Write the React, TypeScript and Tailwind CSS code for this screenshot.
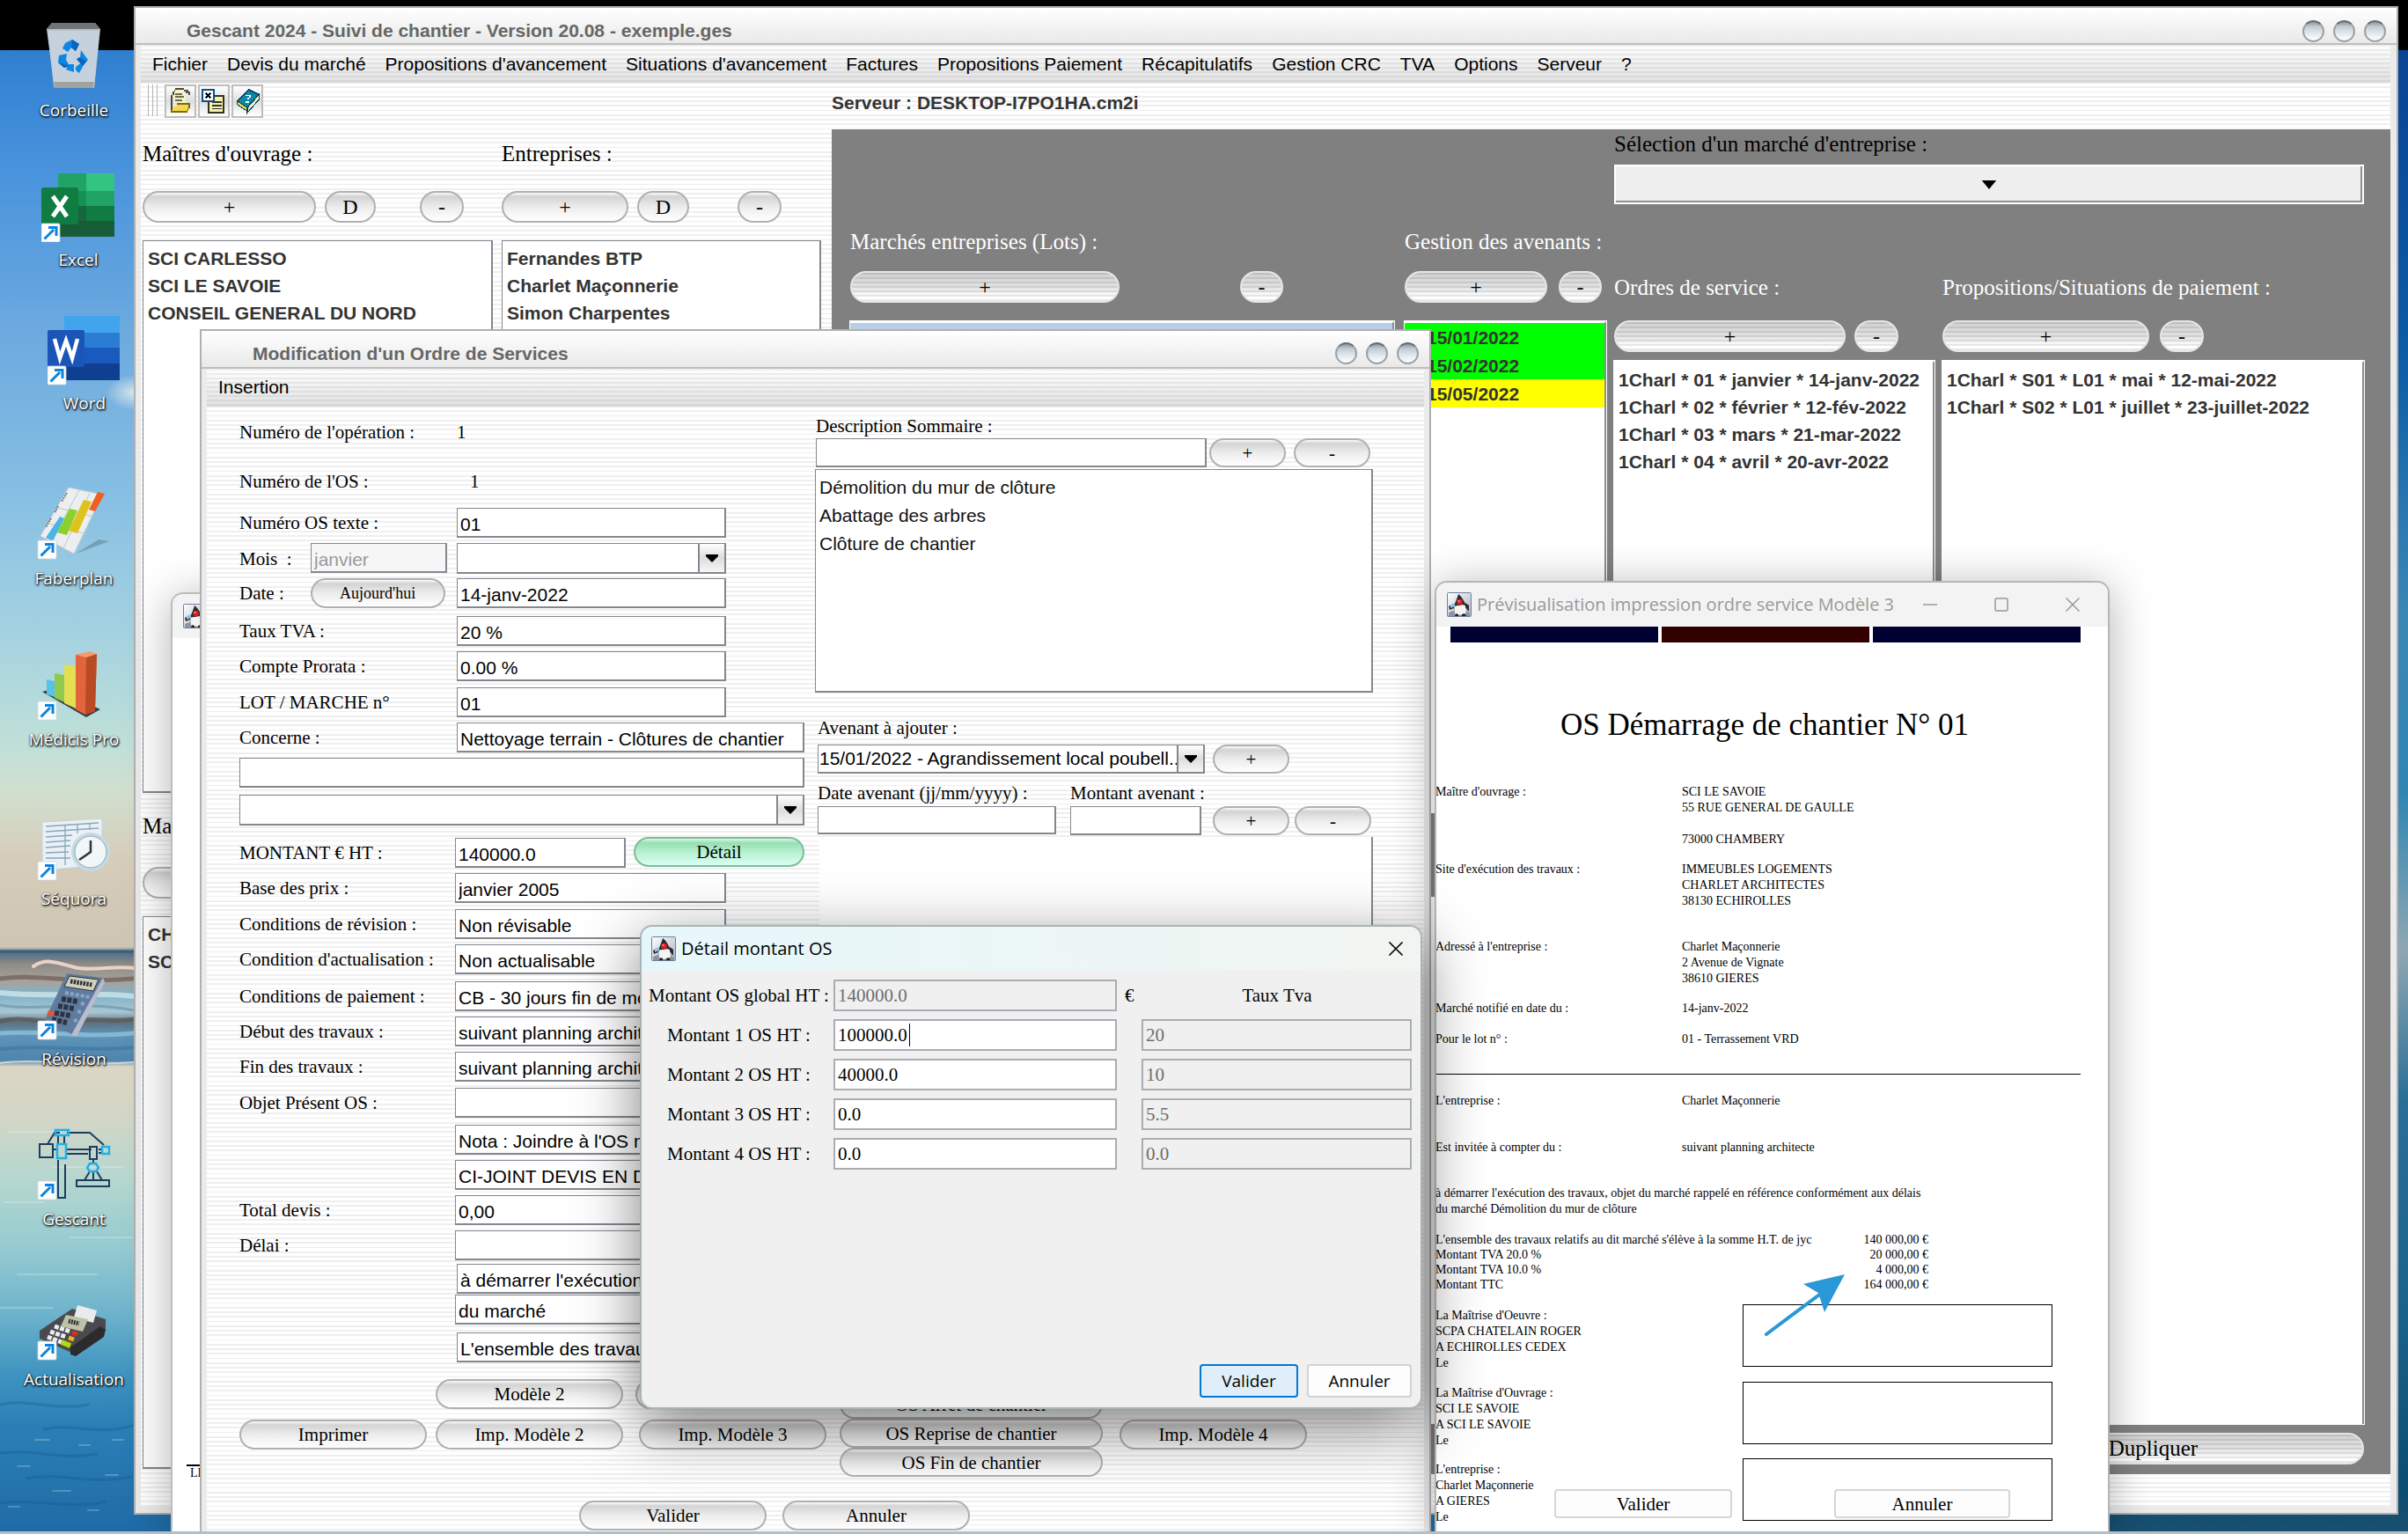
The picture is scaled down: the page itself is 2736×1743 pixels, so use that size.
import React from "react";

const STRIPES =
  "bg-[repeating-linear-gradient(180deg,#efefef_0,#efefef_2px,#fff_2px,#fff_5px,#efefef_5px,#efefef_7px,#fff_7px,#fff_11px,#efefef_11px,#efefef_12px,#fff_12px,#fff_16px,#efefef_16px,#efefef_18px,#fff_18px,#fff_21px)]";
const MENU_STRIPES =
  "bg-[repeating-linear-gradient(180deg,rgba(0,0,0,0.06)_0,rgba(0,0,0,0.06)_2px,transparent_2px,transparent_5px),linear-gradient(180deg,#ffffff,#e2e2e2)]";
const SANS = "font-['Liberation_Sans',Arial,sans-serif]";
const SERIF = "font-['Liberation_Serif','Times_New_Roman',serif]";
const UI = "font-['Open_Sans','Segoe_UI',sans-serif]";
const FIELD = "border border-r-2 border-b-2 border-[#85878f] bg-white";

/* ---------- Shared controls ---------- */

function Pill({
  children,
  className = "",
  tone = "light",
}: {
  children: React.ReactNode;
  className?: string;
  tone?: "light" | "panel" | "green";
}) {
  const tones = {
    light:
      "border-[#b0b0b0] bg-[linear-gradient(180deg,#fafafa_0%,#d3d3d3_14%,#ececec_50%,#ffffff_100%)]",
    panel:
      "border-[#e6e6e6] bg-[repeating-linear-gradient(180deg,rgba(0,0,0,0.09)_0,rgba(0,0,0,0.09)_2px,transparent_2px,transparent_5px),linear-gradient(180deg,#cfcfcf_0%,#e2e2e2_50%,#ffffff_85%)]",
    green:
      "border-[#7dbd98] bg-[linear-gradient(180deg,#d9f8e6_0%,#98dfb2_16%,#b5f0cf_50%,#d8fff4_100%)]",
  };
  return (
    <button
      type="button"
      className={`flex shrink-0 items-center justify-center rounded-full border-2 text-black ${SERIF} ${tones[tone]} ${className}`}
    >
      {children}
    </button>
  );
}

function WindowDots() {
  return (
    <div className="flex gap-[10px]">
      {["Réduire", "Agrandir", "Fermer"].map((n) => (
        <button
          key={n}
          type="button"
          aria-label={n}
          className="size-[25px] rounded-full border-2 border-[#9aa1a7] border-t-[#666d73] bg-[linear-gradient(180deg,#8f979e_0%,#c3ccd3_25%,#dfe8ee_60%,#ffffff_100%)]"
        />
      ))}
    </div>
  );
}

function Combo({
  id,
  label,
  value,
  className = "",
}: {
  id: string;
  label?: string;
  value: string;
  className?: string;
}) {
  return (
    <div className={`relative shrink-0 ${FIELD} ${className}`}>
      <select
        id={id}
        aria-label={label}
        defaultValue={value}
        className={`h-full w-full appearance-none bg-transparent pr-6 pl-px text-[21px] leading-7 text-black ${SANS}`}
      >
        <option value={value}>{value}</option>
      </select>
      <div className="pointer-events-none absolute inset-y-0 right-0 flex w-[30px] items-center justify-center border-l-2 border-[#85878f] bg-[linear-gradient(180deg,#fff,#ddd_50%,#f6f6f6)]">
        <svg width="14" height="9" viewBox="0 0 14 9">
          <path d="M0 0H14V2L7 9L0 2Z" fill="#000" />
        </svg>
      </div>
    </div>
  );
}

function Duke({ className = "" }: { className?: string }) {
  return (
    <svg className={className} width="28" height="28" viewBox="0 0 28 28" aria-hidden="true">
      <defs>
        <linearGradient id="dukeBg" x1="0" y1="0" x2="1" y2="1">
          <stop offset="0" stopColor="#ffffff" />
          <stop offset="1" stopColor="#a9b2c4" />
        </linearGradient>
      </defs>
      <rect x="0.5" y="0.5" width="27" height="27" rx="1" fill="url(#dukeBg)" stroke="#6d7f9b" />
      <path d="M2 23C7 20 20 20 26 24V27H2Z" fill="#8b93a5" />
      <path d="M9 14C8 19 8 22 9 26H20C23 24 23 18 20 13Z" fill="#f4f4f4" stroke="#777" strokeWidth="0.6" />
      <path d="M13 2C17 5 20 10 22 16C20 14 17 14 14 15C12 15 10 15 8 16C10 10 12 6 13 2Z" fill="#2b2b2e" />
      <path d="M8 13L2 16L3 20L8 18Z" fill="#2a2a2e" />
      <path d="M4 14L9 12V16L4 18Z" fill="#8cc5de" />
      <path d="M21 12L25 15L25 22L21 17Z" fill="#2a2a2e" />
      <circle cx="14.5" cy="11" r="3.300" fill="#e21d1d" />
      <circle cx="13.6" cy="10" r="1.1" fill="#ff8f8f" />
      <path d="M10 24L9 27H13V25ZM17 25V27H22L20 24Z" fill="#222" />
    </svg>
  );
}

/* ---------- Desktop ---------- */

function Shortcut({ x, y }: { x: number; y: number }) {
  return (
    <g transform={`translate(${x} ${y})`}>
      <rect width="21" height="21" rx="1.5" fill="#fff" stroke="#c9d4e2" strokeWidth="0.8" />
      <path d="M3.5 17.5L14 7" stroke="#0b84de" strokeWidth="3" />
      <path d="M8 4.500H17V14" fill="none" stroke="#0b84de" strokeWidth="3" />
    </g>
  );
}

function DesktopIcon({
  name,
  className,
  children,
}: {
  name: string;
  className: string;
  children: React.ReactNode;
}) {
  return (
    <button type="button" className={`absolute flex w-[160px] flex-col items-center ${className}`}>
      <svg width="84" height="84" viewBox="0 0 84 84" aria-hidden="true">
        {children}
      </svg>
      <span
        className={`mt-[6px] text-[19px] leading-7 text-white [text-shadow:1px_1px_2px_#000,0_1px_3px_#000] ${UI}`}
      >
        {name}
      </span>
    </button>
  );
}

function Desktop() {
  return (
    <>
      <div className="absolute inset-0 bg-[linear-gradient(180deg,#2f7fd0_57px,#4a94dd_200px,#6daadf_380px,#86bfe3_560px,#a5d2e0_720px,#c0e0d8_850px,#d2dfcf_900px,#d6ccb9_980px,#cfc5b5_1076px,#4d6e86_1082px,#8e8a86_1095px,#a9a29a_1115px,#7fb3cb_1130px,#a9c7d2_1150px,#5d7180_1162px,#5e95b8_1175px,#4f84ad_1205px,#dcd6c4_1212px,#d3d6c6_1270px,#b5d7cf_1340px,#94cad0_1420px,#6fb4cc_1490px,#3f94c0_1560px,#2a80b6_1620px,#1f6aa6_1743px)]" />
      <div className="absolute inset-y-0 right-0 w-1/3 bg-[linear-gradient(180deg,#0a4494_57px,#0c5ba4_400px,#2b7ab2_600px,#3b87b4_700px,#2f86b3_900px,#8fa7b2_1080px,#2a6f96_1250px,#1b6288_1500px,#0b4d72_1690px,#1b4f70_1743px)]" />
      <svg className="absolute top-[1076px] left-0" width="152" height="660" viewBox="0 0 152 660" aria-hidden="true">
        <g fill="none" strokeLinecap="round">
          <path d="M0 5H152" stroke="#35587a" strokeWidth="3" strokeOpacity="0.8" />
          <path d="M38 22C52 12 66 18 84 23S130 21 152 24" stroke="#e8d3c6" strokeWidth="4" />
          <path d="M0 36C40 30 80 42 152 36" stroke="#6d5d55" strokeWidth="5" strokeOpacity="0.7" />
          <path d="M0 52C60 58 100 50 152 56" stroke="#cfe6ec" strokeWidth="6" strokeOpacity="0.8" />
          <path d="M0 66C40 74 90 60 152 72" stroke="#6c96ae" strokeWidth="3" strokeOpacity="0.7" />
          <path d="M0 84C30 78 50 88 80 84S130 86 152 82" stroke="#5a5450" strokeWidth="5" strokeOpacity="0.75" />
          <path d="M0 98C50 94 90 104 152 98" stroke="#8fc0da" strokeWidth="5" strokeOpacity="0.8" />
          <path d="M0 116C50 110 100 120 152 114" stroke="#3e78a4" strokeWidth="4" strokeOpacity="0.7" />
          <path d="M0 132C40 126 90 136 152 131" stroke="#dfe3dc" strokeWidth="2" strokeOpacity="0.8" />
          <g stroke="#ffffff" strokeOpacity="0.22" strokeWidth="2">
            <path d="M10 210H70M60 250H140M5 290H50M80 330H150M20 372H110M0 410H60M40 560H56M90 566H102M20 590H34M120 600H134M60 618H80M100 640H112M10 636H22M128 560H140" />
          </g>
          <g stroke="#0f5490" strokeOpacity="0.3" strokeWidth="3">
            <path d="M0 520C30 512 60 528 100 520M50 548C80 540 110 556 150 544M0 575C40 570 70 584 110 576M30 604C70 596 100 612 150 602M0 632C40 626 80 640 120 630" />
          </g>
        </g>
      </svg>
      <div className="absolute top-[426px] left-[120px] h-10 w-16 bg-[radial-gradient(closest-side,rgba(240,240,238,0.8),rgba(240,240,238,0))]" />
      <div className="absolute inset-x-0 top-0 h-[57px] bg-black" />

      <DesktopIcon name="Corbeille" className="top-[21px] left-[4px]">
        <path d="M11 12L17 5H66L72 12L65 79H20Z" fill="#b9c2cb" />
        <path d="M11 12L17 5H66L72 12Z" fill="#6f7478" />
        <path d="M12 14H71L65 78H19Z" fill="#c9d6e2" fillOpacity="0.75" />
        <path d="M19 72H65L64 79H20Z" fill="#a1a39f" />
        <g fill="#0c87e4">
          <path d="M32 28L40 24L48 29L44 37L39 33L35 38L29 34Z" />
          <path d="M50 36L58 47L52 54L45 46L49 44Z" />
          <path d="M25 42L34 40L33 47L37 54L31 56L24 50Z" />
          <path d="M36 52H42V61L33 58ZM44 55L52 49V55L48 62L44 59Z" />
        </g>
        <path d="M40 24L48 29L44 37L39 33ZM52 54L45 46L49 44L56 49ZM24 50L37 54L31 56Z" fill="#0a63bd" />
      </DesktopIcon>
      <DesktopIcon name="Excel" className="top-[191px] left-[9px]">
        <path d="M19 6H51V78H19Z" fill="#21a366" />
        <path d="M51 6H83V26H51Z" fill="#33c481" />
        <path d="M19 26H51V44H19Z" fill="#169154" />
        <path d="M51 26H83V43H51Z" fill="#21a366" />
        <path d="M19 43H51V60H19Z" fill="#14683c" />
        <path d="M51 43H83V60H51Z" fill="#107c41" />
        <path d="M19 60H83V78H19Z" fill="#185c37" />
        <rect x="0" y="22" width="42" height="42" rx="2" fill="#107c41" />
        <path d="M13 32L29 55M29 32L13 55" fill="none" stroke="#fff" strokeWidth="5" />
        <Shortcut x={0} y={63} />
      </DesktopIcon>
      <DesktopIcon name="Word" className="top-[354px] left-[16px]">
        <path d="M19 5H82V24H19Z" fill="#41a5ee" />
        <path d="M19 24H82V41H19Z" fill="#2b7cd3" />
        <path d="M19 41H82V59H19Z" fill="#185abd" />
        <path d="M19 59H82V78H19Z" fill="#103f91" />
        <rect x="0" y="21" width="42" height="42" rx="2" fill="#1b55b8" />
        <path d="M8 31L14 53L21 33L28 53L34 31" fill="none" stroke="#fff" strokeWidth="4.500" />
        <Shortcut x={0} y={62} />
      </DesktopIcon>
      <DesktopIcon name="Faberplan" className="top-[553px] left-[4px]">
        <path d="M44 76L82 62L70 60Z" fill="#456" fillOpacity="0.35" />
        <path d="M36 1L74 9L42 76L4 56Z" fill="#eceef0" stroke="#cfd3d6" />
        <path d="M48 4L16 62M60 7L30 70M14 42L56 54M24 24L64 34" stroke="#c3c8cc" />
        <path d="M10 58L26 34L31 36L18 62Z" fill="#4cb5e6" />
        <path d="M23 52L37 25L46 27L34 55Z" fill="#8bd02c" />
        <path d="M36 50L53 15L62 17L46 53Z" fill="#e0c21c" />
        <path d="M59 26L69 6L77 8L66 28Z" fill="#ee5f22" />
        <path d="M34 7L28 17M24 22L20 30M16 36L10 46" stroke="#777" strokeWidth="2" strokeDasharray="2 1" />
        <Shortcut x={1} y={61} />
      </DesktopIcon>
      <DesktopIcon name="Médicis Pro" className="top-[736px] left-[4px]">
        <path d="M6 50L20 46L72 70L56 79Z" fill="#3c3f42" />
        <path d="M11 36L20 38V56L11 53Z" fill="#58c2ea" />
        <path d="M20 29L31 31V62L20 57Z" fill="#8fca4f" />
        <path d="M31 19L44 21V69L31 63Z" fill="#e3df52" />
        <path d="M44 8L60 5L68 7L66 72L55 76L44 70Z" fill="#e2643a" />
        <path d="M56 11L68 7L66 72L55 76Z" fill="#b94a26" />
        <path d="M44 8L60 4L68 7L56 11Z" fill="#f39a6e" />
        <Shortcut x={1} y={61} />
      </DesktopIcon>
      <DesktopIcon name="Séquora" className="top-[917px] left-[4px]">
        <path d="M6 17L74 13V66L6 72Z" fill="#e9f1f6" stroke="#c3d2dc" />
        <path d="M10 22L70 18M10 28L70 24M10 34L40 32M10 40L38 38M10 46L38 44M10 52L36 51M10 58L38 58M32 21V66M46 20V30M60 18V26" stroke="#8aa7ba" strokeWidth="1.300" />
        <circle cx="61" cy="51" r="22" fill="#c5d9e6" />
        <circle cx="61" cy="51" r="18" fill="#f1f6f9" stroke="#8fa5b5" />
        <path d="M61 38V51L48 60" fill="none" stroke="#333" strokeWidth="2.500" />
        <Shortcut x={1} y={62} />
      </DesktopIcon>
      <DesktopIcon name="Révision" className="top-[1099px] left-[4px]">
        <path d="M34 7L75 12L42 77L8 62Z" fill="#5f7ca0" />
        <path d="M75 12L77 17L45 79L39 77Z" fill="#b9bccb" />
        <path d="M37 10L70 14L64 27L31 22Z" fill="#cfd0c0" stroke="#333" />
        <path d="M38 16L63 20" stroke="#333" strokeWidth="5" strokeDasharray="2.500 1.200" />
        <path d="M28 36L46 39M24 44L42 47M20 52L38 55M17 59L34 63" stroke="#2d3440" strokeWidth="6" strokeDasharray="5 1.500" />
        <path d="M32 29L60 34M50 41L54 42M46 50L50 51M42 60L46 61" stroke="#8ba4c4" strokeWidth="4" strokeDasharray="4 2" />
        <path d="M13 49L20 51L18 56L11 54Z" fill="#ee5230" />
        <Shortcut x={1} y={61} />
      </DesktopIcon>
      <DesktopIcon name="Gescant" className="top-[1281px] left-[4px]">
        <g fill="none" stroke="#1d3c5e" strokeWidth="2">
          <path d="M12 19L20 6H26M34 6H60L76 20" />
          <path d="M18 25H22M34 25H62M34 30H58M70 25H74M70 29H74" />
          <rect x="3" y="19" width="15" height="15" />
          <rect x="60" y="22" width="8" height="14" />
          <path d="M24 37V80H32V42M24 8V19M31 8V19M64 36V40M60 50L54 60M64 50V60M68 50L74 60" />
          <rect x="45" y="60" width="37" height="7" />
        </g>
        <g fill="none" stroke="#1fb0e6" strokeWidth="2.500">
          <rect x="21" y="3" width="15" height="6" />
          <rect x="23" y="19" width="10" height="16" />
          <rect x="74" y="22" width="8" height="8" />
          <path d="M60 41H67L70 46L67 50H60L57 46Z" />
        </g>
        <Shortcut x={1} y={61} />
      </DesktopIcon>
      <DesktopIcon name="Actualisation" className="top-[1463px] left-[4px]">
        <path d="M3 49L40 24L78 36V48L44 76L3 58Z" fill="#4a4a4e" />
        <path d="M38 68L72 44L78 48L76 56L44 78L38 76Z" fill="#2b2b2e" />
        <path d="M46 20L68 26L64 40L42 34Z" fill="#e9ebec" />
        <path d="M33 31L58 36L52 50L27 44Z" fill="#bcc3a8" />
        <path d="M36 38L48 41" stroke="#333" strokeWidth="5" strokeDasharray="2 1" />
        <path d="M20 44L38 50M15 50L33 56M12 56L28 62" stroke="#eceef0" strokeWidth="5" strokeDasharray="5 1.500" />
        <path d="M40 51L46 53" stroke="#e02a20" strokeWidth="5" />
        <path d="M36 57L42 59" stroke="#f2b21d" strokeWidth="5" />
        <path d="M28 62L38 66" stroke="#b4d90f" strokeWidth="6" />
        <Shortcut x={1} y={61} />
      </DesktopIcon>
    </>
  );
}

/* ---------- Main window ---------- */

const MENUS = [
  "Fichier",
  "Devis du marché",
  "Propositions d'avancement",
  "Situations d'avancement",
  "Factures",
  "Propositions Paiement",
  "Récapitulatifs",
  "Gestion CRC",
  "TVA",
  "Options",
  "Serveur",
  "?",
];

function ToolButton({ label, children }: { label: string; children: React.ReactNode }) {
  return (
    <button
      type="button"
      aria-label={label}
      className="flex h-[38px] w-[36px] items-center justify-center border-2 border-[#bdbdbd] bg-[linear-gradient(180deg,#fff,#dedede_50%,#fff)]"
    >
      <svg width="30" height="30" viewBox="0 0 16 16" shapeRendering="crispEdges" aria-hidden="true">
        {children}
      </svg>
    </button>
  );
}

function MainList({ items, className = "" }: { items: string[]; className?: string }) {
  return (
    <ul
      className={`overflow-hidden pt-1 pl-[5px] text-[21px] leading-[31px] font-bold whitespace-nowrap text-[#333] ${SANS} ${className}`}
    >
      {items.map((t) => (
        <li key={t}>{t}</li>
      ))}
    </ul>
  );
}

const PANEL_LIST = "border-t-2 border-r-2 border-white border-r-[#8a8c94] outline-1 outline-white bg-white";
const CAPTION = `h-7 text-[25px] leading-7 whitespace-nowrap ${SERIF}`;

function MainWindow() {
  return (
    <section className="absolute top-[7px] right-[11px] bottom-[22px] left-[152px] flex flex-col border-2 border-[#b0b0b0] bg-[#ebebeb] pr-[7px] pb-[7px] pl-[6px]">
      <header className="-mr-[7px] -ml-[6px] flex h-[42px] shrink-0 items-center justify-between border-b-2 border-[#bdbdbd] bg-[linear-gradient(180deg,#fff,#e9e9e9)] pt-3 pr-3 pl-[58px]">
        <h1 className={`text-[21px] leading-7 font-bold text-[#666] ${SANS}`}>
          Gescant 2024 - Suivi de chantier - Version 20.08 - exemple.ges
        </h1>
        <WindowDots />
      </header>
      <div className={`flex min-h-0 flex-1 flex-col ${STRIPES}`}>
        <nav
          className={`flex h-[43px] shrink-0 items-center gap-[22px] border-b-2 border-[#d8d8d8] pt-[3px] pl-[13px] text-[21px] leading-7 whitespace-nowrap text-black ${SANS} ${MENU_STRIPES}`}
        >
          {MENUS.map((m) => (
            <button key={m} type="button">
              {m}
            </button>
          ))}
        </nav>
        <div className="flex h-[53px] shrink-0 items-start pt-[2px]">
          <div className="flex w-[785px] items-start gap-[2px] pl-2">
            <div className="mr-[6px] flex h-[36px] gap-[4px]">
              <span className="w-px bg-[#b5b5b5]" />
              <span className="w-px bg-[#b5b5b5]" />
              <span className="w-px bg-[#b5b5b5]" />
            </div>
            <ToolButton label="Ouvrir">
              <path d="M4 1H10V3H11V9H4Z" fill="#f7f3c4" />
              <path d="M5 0H10V1H5ZM4 1H5V2H4ZM3 2H4V4H3ZM2 4H3V14H2Z" fill="#4b4634" />
              <path d="M5 3H9V4H5ZM5 5H10V6H5ZM5 7H9V8H5Z" fill="#6b6b5c" />
              <path d="M6 9H14V11L12 15H2L4 11H6Z" fill="#f3da4c" />
              <path d="M2 14H12V15H2ZM12 12H13V14H12ZM13 10H14V12H13ZM6 10H14V9H6Z" fill="#7a6a10" />
              <path d="M10 1H13V2H14V4H13V3H11V2H10Z" fill="#555" />
            </ToolButton>
            <ToolButton label="Exporter vers Excel">
              <path d="M5 5H14V15H5Z" fill="#f7f0a8" stroke="#33311c" />
              <path d="M7 8H13V9H7ZM7 10H13V11H7ZM7 12H13V13H7Z" fill="#333" />
              <path d="M1 1H8V8H1Z" fill="#fff" stroke="#0b4f86" strokeWidth="1.200" />
              <path d="M3 3L6 6M6 3L3 6" stroke="#000" strokeWidth="1.300" />
            </ToolButton>
            <ToolButton label="Aide">
              <path d="M2 8L9 1L15 4L8 12Z" fill="#0d87a8" stroke="#06425c" strokeWidth="0.800" />
              <path d="M2 8L8 12V14L2 10Z" fill="#f5e04c" stroke="#06425c" strokeWidth="0.600" />
              <path d="M8 12L15 4V7L8 15Z" fill="#f2efcf" stroke="#06425c" strokeWidth="0.600" />
              <path d="M7 4H10V6H9V7H8V6H9V5H7ZM7 8H9V9H7Z" fill="#fff" />
            </ToolButton>
          </div>
          <p className={`pt-[7px] text-[21px] leading-7 font-bold text-[#333] ${SANS}`}>
            Serveur : DESKTOP-I7PO1HA.cm2i
          </p>
        </div>

        <div className="flex min-h-0 flex-1">
          <div className="flex w-[785px] shrink-0 gap-[10px] pt-[14px] pb-[43px] pl-[2px] text-black">
            <div className="flex w-[398px] flex-col">
              <h2 className={CAPTION}>Maîtres d'ouvrage :</h2>
              <div className="mt-7 flex text-[24px]">
                <Pill className="h-9 w-[197px]">+</Pill>
                <Pill className="ml-[10px] h-9 w-[58px]">D</Pill>
                <Pill className="ml-[50px] h-9 w-[50px]">-</Pill>
              </div>
              <MainList
                className={`mt-5 flex-1 ${FIELD}`}
                items={["SCI CARLESSO", "SCI LE SAVOIE", "CONSEIL GENERAL DU NORD"]}
              />
              <h2 className={`mt-6 ${CAPTION}`}>Ma</h2>
              <div className="mt-8 flex text-[24px]">
                <Pill className="h-9 w-[197px]"> </Pill>
              </div>
              <MainList className={`mt-5 flex-1 ${FIELD}`} items={["CH", "SC"]} />
            </div>
            <div className="flex w-[363px] flex-col">
              <h2 className={CAPTION}>Entreprises :</h2>
              <div className="mt-7 flex text-[24px]">
                <Pill className="h-9 w-[144px]">+</Pill>
                <Pill className="ml-[10px] h-9 w-[59px]">D</Pill>
                <Pill className="ml-[55px] h-9 w-[50px]">-</Pill>
              </div>
              <MainList
                className={`mt-5 flex-1 ${FIELD}`}
                items={["Fernandes BTP", "Charlet Maçonnerie", "Simon Charpentes"]}
              />
            </div>
          </div>

          <div className="mb-[37px] flex min-w-0 flex-1 bg-[#808080] pr-[30px] pl-[21px]">
            <div className="flex w-[618px] shrink-0 flex-col pt-[114px] pb-[57px] text-white">
              <h2 className={CAPTION}>Marchés entreprises (Lots) :</h2>
              <div className="mt-[19px] flex text-[24px]">
                <Pill tone="panel" className="h-9 w-[306px]">+</Pill>
                <Pill tone="panel" className="ml-[137px] h-9 w-[49px]">-</Pill>
              </div>
              <div className={`mt-[21px] flex-1 ${PANEL_LIST}`}>
                <div className="h-8 bg-[#b8cfe5]" />
              </div>
            </div>
            <div className="ml-3 flex w-[229px] shrink-0 flex-col pt-[114px] pb-[57px] text-white">
              <h2 className={CAPTION}>Gestion des avenants :</h2>
              <div className="mt-[19px] flex text-[24px]">
                <Pill tone="panel" className="h-9 w-[162px]">+</Pill>
                <Pill tone="panel" className="ml-[13px] h-9 w-[49px]">-</Pill>
              </div>
              <ul
                className={`mt-[21px] h-[558px] text-[21px] leading-[30px] font-bold text-[#333] ${SANS} ${PANEL_LIST}`}
              >
                <li className="bg-[#00ff00] pt-[2px] pl-[25px]">15/01/2022</li>
                <li className="bg-[#00ff00] pt-[2px] pl-[25px]">15/02/2022</li>
                <li className="bg-[#ffff00] pt-[2px] pl-[25px]">15/05/2022</li>
              </ul>
              <div className="mt-24 flex-1 bg-white" />
            </div>
            <div className="ml-[9px] flex min-w-0 flex-1 flex-col pt-[3px] pb-[11px]">
              <label htmlFor="marche" className={`text-black ${CAPTION}`}>
                Sélection d'un marché d'entreprise :
              </label>
              <div className="relative mt-[9px] h-[45px] shrink-0 border-2 border-white bg-white">
                <select
                  id="marche"
                  className="h-full w-full appearance-none border-r-2 border-b-2 border-[#8f8f8f] bg-[#eee]"
                />
                <svg
                  className="pointer-events-none absolute top-[16px] left-1/2 -ml-[9px]"
                  width="18"
                  height="10"
                  viewBox="0 0 18 11"
                  aria-hidden="true"
                >
                  <path d="M0 0H18L9 11Z" fill="#000" />
                </svg>
              </div>
              <div className="mt-[81px] flex min-h-0 flex-1 gap-[9px] text-white">
                <div className="flex w-[364px] shrink-0 flex-col">
                  <h2 className={CAPTION}>Ordres de service :</h2>
                  <div className="mt-[23px] flex gap-[10px] text-[24px]">
                    <Pill tone="panel" className="h-9 w-[263px]">+</Pill>
                    <Pill tone="panel" className="h-9 w-[50px]">-</Pill>
                  </div>
                  <MainList
                    className={`mt-[10px] mb-[46px] flex-1 ${PANEL_LIST}`}
                    items={[
                      "1Charl * 01 * janvier * 14-janv-2022",
                      "1Charl * 02 * février * 12-fév-2022",
                      "1Charl * 03 * mars * 21-mar-2022",
                      "1Charl * 04 * avril * 20-avr-2022",
                    ]}
                  />
                </div>
                <div className="flex min-w-0 flex-1 flex-col">
                  <h2 className={CAPTION}>Propositions/Situations de paiement :</h2>
                  <div className="mt-[23px] flex gap-[12px] text-[24px]">
                    <Pill tone="panel" className="h-9 w-[235px]">+</Pill>
                    <Pill tone="panel" className="h-9 w-[50px]">-</Pill>
                  </div>
                  <MainList
                    className={`mt-[10px] flex-1 ${PANEL_LIST}`}
                    items={[
                      "1Charl * S01 * L01 * mai * 12-mai-2022",
                      "1Charl * S02 * L01 * juillet * 23-juillet-2022",
                    ]}
                  />
                  <Pill tone="panel" className="mt-[10px] h-9 w-full text-[25px]">Dupliquer</Pill>
                </div>
              </div>
            </div>
          </div>
        </div>
      </div>
    </section>
  );
}

/* ---------- Covered window ---------- */

function CoveredWindow() {
  return (
    <section className="absolute top-[673px] bottom-[3px] left-[194px] w-[500px] overflow-hidden rounded-t-[14px] border-2 border-b-0 border-[#bcbcbc] bg-white shadow-[0_6px_50px_rgba(0,0,0,0.3)]">
      <header className="h-[50px] bg-[#f3f3f3] pt-[11px] pl-3">
        <Duke />
      </header>
      <p className={`mt-[939px] ml-4 w-fit border-t-2 border-black pl-1 text-[14px] leading-4 text-black ${SERIF}`}>
        LE
      </p>
    </section>
  );
}

/* ---------- Service order form ---------- */

function Row({
  label,
  id,
  value = "",
  gap,
  wide = "w-[306px]",
  start = "w-[247px]",
  before,
}: {
  label?: string;
  id: string;
  value?: string;
  gap: string;
  wide?: string;
  start?: string;
  before?: React.ReactNode;
}) {
  return (
    <div className={`flex h-[34px] items-center ${gap}`}>
      <div className={`flex shrink-0 items-center ${start}`}>
        {label ? <label htmlFor={id}>{label}</label> : null}
        {before}
      </div>
      <input
        id={id}
        aria-label={label ? undefined : "Texte de l'ordre"}
        defaultValue={value}
        className={`h-[34px] pt-1 pl-[3px] text-[21px] leading-7 text-black ${wide} ${SANS} ${FIELD}`}
      />
    </div>
  );
}

const B = "h-[34px] w-[213px] text-[21px]";
const L2 = "w-[245px]";
const W2 = "w-[308px]";

function OrderWindow() {
  return (
    <section className="absolute top-[374px] bottom-[3px] left-[227px] flex w-[1399px] flex-col overflow-hidden border-2 border-b-0 border-[#b0b0b0] bg-[#ebebeb] pr-[6px] pl-[6px]">
      <header className="-mx-[6px] flex h-[43px] shrink-0 items-center justify-between border-b-2 border-[#bdbdbd] bg-[linear-gradient(180deg,#fff,#e9e9e9)] pt-[10px] pr-[12px] pl-[58px]">
        <h1 className={`text-[21px] leading-7 font-bold text-[#666] ${SANS}`}>Modification d'un Ordre de Services</h1>
        <WindowDots />
      </header>
      <div className={`flex-1 ${STRIPES}`}>
        <nav className={`flex h-[43px] items-center border-b-2 border-[#d8d8d8] pl-[13px] text-[21px] leading-7 text-black ${SANS} ${MENU_STRIPES}`}>
          <button type="button">Insertion</button>
        </nav>
        <form className={`pl-[37px] text-[21px] leading-7 whitespace-nowrap text-black ${SERIF}`}>
          <div className="flex gap-3">
            <div className="w-[642px]">
              <p className="mt-[15px] flex h-7">
                <span className="w-[247px]">Numéro de l'opération :</span>1
              </p>
              <p className="mt-7 flex h-7">
                <span className="w-[262px]">Numéro de l'OS :</span>1
              </p>
              <Row gap="mt-4" label="Numéro OS texte :" id="os-texte" value="01" />
              <div className="mt-1.5 flex h-[35px] items-start">
                <label htmlFor="mois" className="w-[81px] pt-1 whitespace-pre">Mois  :</label>
                <input
                  id="mois"
                  disabled
                  defaultValue="janvier"
                  className={`mr-[11px] h-[34px] w-[155px] border border-r-2 border-b-2 border-[#85878f] bg-[#f6f6f6] pt-1 pl-[3px] text-[21px] text-[#999] ${SANS}`}
                />
                <Combo id="mois-liste" label="Choix du mois" value="" className="h-[35px] w-[306px]" />
              </div>
              <Row
                gap="mt-[5px]"
                label="Date :"
                id="date"
                value="14-janv-2022"
                before={<Pill className="ml-[30px] h-[34px] w-[153px] text-[18px]">Aujourd'hui</Pill>}
              />
              <Row gap="mt-[9px]" label="Taux TVA :" id="tva" value="20 %" />
              <Row gap="mt-1.5" label="Compte Prorata :" id="prorata" value="0.00 %" />
              <Row gap="mt-[7px]" label="LOT / MARCHE n°" id="lot" value="01" />
              <Row gap="mt-1.5" label="Concerne :" id="concerne" value="Nettoyage terrain - Clôtures de chantier" wide="w-[395px]" />
              <Row gap="mt-1.5" id="concerne-2" start="w-0" wide="w-[642px]" />
              <div className="mt-2">
                <Combo id="objet-liste" label="Objet" value="" className="h-[35px] w-[642px]" />
              </div>
              <div className="mt-[14px] flex">
                <Row gap="" label="MONTANT € HT :" id="montant" value="140000.0" start={L2} wide="w-[194px]" />
                <Pill tone="green" className="-mt-px ml-[9px] h-[34px] w-[194px] text-[21px]">Détail</Pill>
              </div>
              <Row gap="mt-1.5" label="Base des prix :" id="base" value="janvier 2005" start={L2} wide={W2} />
              <Row gap="mt-[7px]" label="Conditions de révision :" id="revision" value="Non révisable" start={L2} wide={W2} />
              <Row gap="mt-1.5" label="Condition d'actualisation :" id="actu" value="Non actualisable" start={L2} wide={W2} />
              <Row gap="mt-2" label="Conditions de paiement :" id="paiement" value="CB - 30 jours fin de mois" start={L2} wide={W2} />
              <Row gap="mt-1.5" label="Début des travaux :" id="debut" value="suivant planning architecte" start={L2} wide={W2} />
              <Row gap="mt-1.5" label="Fin des travaux :" id="fin" value="suivant planning architecte" start={L2} wide={W2} />
              <Row gap="mt-[7px]" label="Objet Présent OS :" id="objet" start={L2} wide={W2} />
              <Row gap="mt-2" id="nota" value="Nota : Joindre à l'OS n" start={L2} wide={W2} />
              <Row gap="mt-1.5" id="devis" value="CI-JOINT DEVIS EN D" start={L2} wide={W2} />
              <Row gap="mt-1.5" label="Total devis :" id="total" value="0,00" start={L2} wide={W2} />
              <Row gap="mt-1.5" label="Délai :" id="delai" start={L2} wide={W2} />
              <Row gap="mt-1" id="texte-1" value="à démarrer l'exécution" />
              <Row gap="mt-px" id="texte-2" value="du marché" start={L2} wide={W2} />
              <Row gap="mt-[9px]" id="texte-3" value="L'ensemble des travaux" />
            </div>

            <div className="w-[634px] pt-[10px]">
              <label htmlFor="desc" className="block h-6 pl-px leading-6">Description Sommaire :</label>
              <div className="mt-[2px] flex pl-px">
                <input id="desc" className={`h-[33px] w-[444px] ${FIELD}`} />
                <Pill className="ml-[3px] h-[33px] w-[87px] text-[21px]">+</Pill>
                <Pill className="ml-[9px] h-[33px] w-[87px] text-[21px]">-</Pill>
              </div>
              <ul className={`mt-[2px] h-[254px] pt-1 pl-1 text-[21px] leading-8 text-[#111] ${SANS} ${FIELD}`}>
                <li>Démolition du mur de clôture</li>
                <li>Abattage des arbres</li>
                <li>Clôture de chantier</li>
              </ul>
              <label htmlFor="avenant" className="mt-7 block h-6 pl-[3px] leading-6">Avenant à ajouter :</label>
              <div className="mt-[7px] flex items-center gap-[9px] pl-[3px]">
                <Combo
                  id="avenant"
                  value="15/01/2022 - Agrandissement local poubell.."
                  className="h-[33px] w-[440px]"
                />
                <Pill className="h-[33px] w-[87px] text-[21px]">+</Pill>
              </div>
              <div className="mt-[10px] flex h-6 pl-[3px] leading-6">
                <label htmlFor="date-av" className="w-[287px]">Date avenant (jj/mm/yyyy) :</label>
                <label htmlFor="montant-av">Montant avenant :</label>
              </div>
              <div className="mt-[3px] flex pl-[3px]">
                <input id="date-av" className={`mr-4 h-8 w-[271px] ${FIELD}`} />
                <input id="montant-av" className={`h-[33px] w-[149px] ${FIELD}`} />
                <Pill className="ml-[13px] h-[33px] w-[87px] text-[21px]">+</Pill>
                <Pill className="ml-[6px] h-[33px] w-[87px] text-[21px]">-</Pill>
              </div>
              <div className="mt-[2px] ml-[5px] h-[240px] border-r-2 border-b-2 border-[#85878f] bg-white" />
            </div>
          </div>

          <div className="mt-[19px] flex items-start">
            <Pill className={`mt-[46px] ${B}`}>Imprimer</Pill>
            <div className="ml-[10px] flex flex-col gap-3">
              <Pill className={B}>Modèle 2</Pill>
              <Pill className={B}>Imp. Modèle 2</Pill>
            </div>
            <div className="ml-[14px] flex flex-col gap-3">
              <Pill className={B}>Modèle 3</Pill>
              <Pill className={`ml-1 ${B}`}>Imp. Modèle 3</Pill>
            </div>
            <div className="mt-3 ml-[15px] flex flex-col">
              <Pill className="h-[33px] w-[299px] text-[21px]">OS Arret de chantier</Pill>
              <Pill className="h-[33px] w-[299px] text-[21px]">OS Reprise de chantier</Pill>
              <Pill className="h-[33px] w-[299px] text-[21px]">OS Fin de chantier</Pill>
            </div>
            <Pill className={`mt-[46px] ml-[19px] ${B}`}>Imp. Modèle 4</Pill>
          </div>
          <div className="mt-[27px] flex gap-[18px] pl-[386px]">
            <Pill className={B}>Valider</Pill>
            <Pill className={B}>Annuler</Pill>
          </div>
        </form>
      </div>
    </section>
  );
}

/* ---------- Print preview ---------- */

function Entry({ label, lines, className }: { label: string; lines: string[]; className: string }) {
  return (
    <div className={`flex ${className}`}>
      <dt className="w-[280px] shrink-0">{label}</dt>
      <dd>
        {lines.map((l, i) => (
          <div key={i} className="h-[18px]">
            {l}
          </div>
        ))}
      </dd>
    </div>
  );
}

function Signature({ lines, className }: { lines: string[]; className: string }) {
  return (
    <div className={`flex ${className}`}>
      <div className="w-[349px] shrink-0 pt-1">
        {lines.map((l) => (
          <div key={l}>{l}</div>
        ))}
      </div>
      <div className="h-[71px] w-[352px] border border-black" />
    </div>
  );
}

const AMOUNTS = [
  ["L'ensemble des travaux relatifs au dit marché s'élève à la somme H.T. de jyc", "140 000,00 €"],
  ["Montant TVA 20.0 %", "20 000,00 €"],
  ["Montant TVA 10.0 %", "4 000,00 €"],
  ["Montant TTC", "164 000,00 €"],
];

function PreviewWindow() {
  return (
    <section className="absolute top-[660px] bottom-[3px] left-[1630px] w-[767px] overflow-hidden rounded-t-[14px] border-2 border-b-0 border-[#b5b5b5] bg-white shadow-[0_6px_50px_rgba(0,0,0,0.3)]">
      <header className="flex h-[50px] items-center bg-[#f3f3f3] pr-8 pl-3">
        <Duke />
        <h1 className={`ml-[6px] text-[20px] leading-7 whitespace-nowrap text-[#999] ${UI}`}>
          Prévisualisation impression ordre service Modèle 3
        </h1>
        <div className="ml-auto flex gap-[65px]">
          <button type="button" aria-label="Réduire">
            <svg width="16" height="16" viewBox="0 0 16 16"><path d="M0 8H16" stroke="#999" strokeWidth="1.500" /></svg>
          </button>
          <button type="button" aria-label="Agrandir">
            <svg width="16" height="16" viewBox="0 0 16 16"><rect x="1" y="1" width="14" height="14" rx="1.500" fill="none" stroke="#999" strokeWidth="1.500" /></svg>
          </button>
          <button type="button" aria-label="Fermer">
            <svg width="16" height="16" viewBox="0 0 16 16"><path d="M0.500 0.500L15.500 15.500M15.500 0.500L0.500 15.500" stroke="#999" strokeWidth="1.500" /></svg>
          </button>
        </div>
      </header>
      <div className={`-ml-px text-[14px] leading-[18px] whitespace-nowrap text-black ${SERIF}`}>
        <div className="flex h-[18px] gap-1 pr-[31px] pl-[17px]">
          <div className="flex-1 bg-[#000033]" />
          <div className="flex-1 bg-[#330000]" />
          <div className="flex-1 bg-[#000033]" />
        </div>
        <h2 className="mt-[72px] pr-4 text-center text-[35px] leading-[44px]">OS Démarrage de chantier N° 01</h2>
        <dl>
          <Entry className="mt-[45px]" label="Maître d'ouvrage :" lines={["SCI LE SAVOIE", "55 RUE GENERAL DE GAULLE", "", "73000 CHAMBERY"]} />
          <Entry className="mt-4" label="Site d'exécution des travaux :" lines={["IMMEUBLES LOGEMENTS", "CHARLET ARCHITECTES", "38130 ECHIROLLES"]} />
          <Entry className="mt-[34px]" label="Adressé à l'entreprise :" lines={["Charlet Maçonnerie", "2 Avenue de Vignate", "38610 GIERES"]} />
          <Entry className="mt-4" label="Marché notifié en date du :" lines={["14-janv-2022"]} />
          <Entry className="mt-[17px]" label="Pour le lot n° :" lines={["01 - Terrassement VRD"]} />
        </dl>
        <hr className="mt-[30px] mr-[31px] border-black" />
        <dl>
          <Entry className="mt-[21px]" label="L'entreprise :" lines={["Charlet Maçonnerie"]} />
          <Entry className="mt-[35px]" label="Est invitée à compter du :" lines={["suivant planning architecte"]} />
        </dl>
        <p className="mt-[34px]">
          à démarrer l'exécution des travaux, objet du marché rappelé en référence conformément aux délais
          <br />
          du marché Démolition du mur de clôture
        </p>
        <table className="mt-[17px] w-[560px] leading-[17px]">
          <tbody>
            {AMOUNTS.map(([l, v]) => (
              <tr key={l}>
                <td className="p-0">{l}</td>
                <td className="p-0 text-right">{v}</td>
              </tr>
            ))}
          </tbody>
        </table>
        <Signature className="mt-[14px]" lines={["La Maîtrise d'Oeuvre :", "SCPA CHATELAIN ROGER", "A ECHIROLLES CEDEX", "Le"]} />
        <Signature className="mt-3" lines={["La Maîtrise d'Ouvrage :", "SCI LE SAVOIE", "A SCI LE SAVOIE", "Le"]} />
        <Signature className="mt-[11px]" lines={["L'entreprise :", "Charlet Maçonnerie", "A GIERES", "Le"]} />
      </div>
      <svg className="absolute top-[784px] left-[370px]" width="98" height="74" viewBox="0 0 98 74" aria-hidden="true">
        <path d="M5 70L72 20" stroke="#2a97d6" strokeWidth="4" strokeLinecap="round" />
        <path d="M94 2L47 13L64 23L71 45Z" fill="#2a97d6" />
      </svg>
      <div className={`absolute bottom-[15px] left-[134px] flex gap-[116px] text-[21px] leading-7 text-black ${SERIF}`}>
        <button type="button" className="h-[33px] w-[202px] rounded-[4px] border-2 border-[#d6d6d6] bg-[#fdfdfd]">Valider</button>
        <button type="button" className="h-[33px] w-[200px] rounded-[4px] border-2 border-[#d6d6d6] bg-[#fdfdfd]">Annuler</button>
      </div>
    </section>
  );
}

/* ---------- Amount dialog ---------- */

const LINES = [
  ["Montant 1 OS HT :", "100000.0", "20"],
  ["Montant 2 OS HT :", "40000.0", "10"],
  ["Montant 3 OS HT :", "0.0", "5.5"],
  ["Montant 4 OS HT :", "0.0", "0.0"],
];
const AMOUNT_FIELD = "h-9 border-2 border-[#abadb3] pl-[3px]";

function AmountDialog() {
  return (
    <section
      role="dialog"
      aria-labelledby="amount-title"
      className="absolute top-[1051px] left-[727px] flex h-[550px] w-[889px] flex-col overflow-hidden rounded-[14px] border-2 border-[#a9b3b6] bg-[#f0f0f0] shadow-[0_20px_70px_rgba(0,0,0,0.5)]"
    >
      <header className="flex h-[50px] shrink-0 items-center bg-[linear-gradient(90deg,#e6f7fb,#f1f5f1)] pr-5 pl-[11px]">
        <Duke />
        <h1 id="amount-title" className={`ml-[6px] text-[20px] leading-7 text-black ${UI}`}>Détail montant OS</h1>
        <button type="button" aria-label="Fermer" className="ml-auto">
          <svg width="16" height="16" viewBox="0 0 16 16"><path d="M0.500 0.500L15.500 15.500M15.500 0.500L0.500 15.500" stroke="#111" strokeWidth="1.600" /></svg>
        </button>
      </header>
      <form className={`flex flex-1 flex-col gap-[9px] pt-[10px] pr-[10px] pb-[11px] pl-2 text-[21px] leading-7 whitespace-nowrap text-black ${SERIF}`}>
        <div className="flex items-center">
          <label htmlFor="m-global" className="w-[210px]">Montant OS global HT :</label>
          <input id="m-global" disabled defaultValue="140000.0" className={`w-[322px] bg-[#f0f0f0] text-[#6d6d6d] ${AMOUNT_FIELD}`} />
          <span className="w-[29px] pl-[9px]">€</span>
          <span className="flex-1 text-center">Taux Tva</span>
        </div>
        {LINES.map(([label, amount, rate], i) => (
          <div key={label} className="flex items-center">
            <label htmlFor={`m-${i}`} className="w-[210px] pl-[21px]">{label}</label>
            <div className="relative">
              <input id={`m-${i}`} defaultValue={amount} className={`block w-[322px] bg-white ${AMOUNT_FIELD}`} />
              {i === 0 ? <span className="absolute top-[5px] left-[86px] h-[26px] w-px bg-black" /> : null}
            </div>
            <input
              disabled
              aria-label={`Taux Tva ${i + 1}`}
              defaultValue={rate}
              className={`ml-[28px] min-w-0 flex-1 bg-[#f0f0f0] text-[#6d6d6d] ${AMOUNT_FIELD}`}
            />
          </div>
        ))}
        <div className={`mt-auto flex justify-end gap-[10px] text-[19px] ${UI}`}>
          <button type="button" className="h-[38px] w-[112px] rounded-[4px] border-2 border-[#0078d4] bg-[#e0eef9]">Valider</button>
          <button type="button" className="h-[38px] w-[119px] rounded-[4px] border-2 border-[#d2d2d2] bg-[#fdfdfd]">Annuler</button>
        </div>
      </form>
    </section>
  );
}

export default function App() {
  return (
    <main className="relative h-screen w-full overflow-hidden bg-black">
      <Desktop />
      <MainWindow />
      <CoveredWindow />
      <OrderWindow />
      <PreviewWindow />
      <AmountDialog />
      <div className="absolute inset-x-0 bottom-0 h-[3px] bg-[#b3bfc7]" />
    </main>
  );
}
